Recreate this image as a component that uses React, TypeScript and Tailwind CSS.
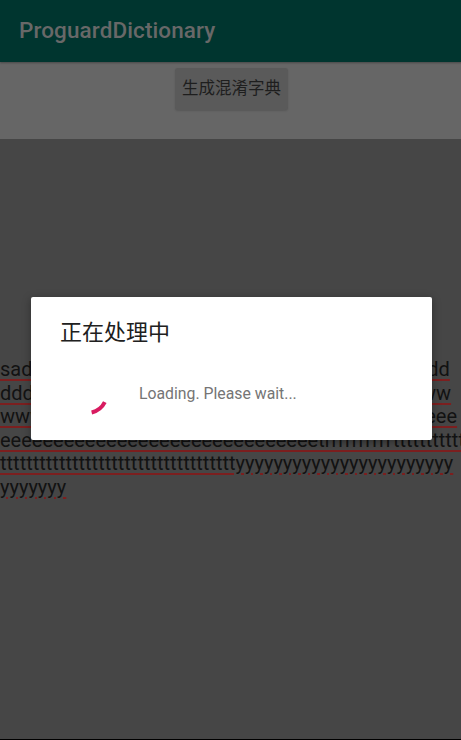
import React from 'react';

const lines = [
  'sad' + 'd'.repeat(37),
  'd'.repeat(20) + 'w'.repeat(15),
  'w'.repeat(17) + 'e'.repeat(19),
  'e'.repeat(30) + 't' + 'r'.repeat(10) + 't'.repeat(14),
  't'.repeat(36) + 'y'.repeat(23),
  'y'.repeat(7),
];

function Spinner() {
  return (
    <svg width="48" height="48" viewBox="0 0 48 48" className="absolute left-[32px] top-[72px]">
      <path d="M 41.82 33.08 A 20 20 0 0 1 28.64 43.45" fill="none" stroke="#d81b60" strokeWidth="4" />
    </svg>
  );
}

export default function App() {
  return (
    <div
      className="relative w-[461px] h-[740px] flex overflow-hidden bg-black"
      style={{ fontFamily: 'Roboto, "Noto Sans CJK SC", sans-serif' }}
    >
      {/* window edge */}
      <div className="w-[2px] h-[739px] flex flex-col">
        <div className="h-[139px] bg-[#6e6e6e]" />
        <div className="h-[475px] bg-[#575757]" />
        <div className="h-[1px] bg-[#8a8a8a]" />
        <div className="h-[24px] bg-[#575757]" />
        <div className="h-[1px] bg-[#8a8a8a]" />
        <div className="flex-1 bg-[#575757]" />
      </div>

      <div className="flex-1 h-[739px] flex flex-col">
        <div className="h-[62px] bg-[#00352f] flex items-center pl-[19px] shadow-[0_1px_2px_rgba(0,0,0,0.3)] z-10">
          <span className="text-[22.5px] font-medium text-[#686868] tracking-[0.1px]">ProguardDictionary</span>
        </div>

        <div className="h-[77px] bg-[#666666] flex justify-start pt-[6px] pl-[175px]">
          <div className="w-[113px] h-[42px] bg-[#5a5a5a] rounded-[3px] flex items-center justify-center text-[16.5px] text-[#1e1e1e] shadow-[0_1px_2px_rgba(0,0,0,0.15)]">
            生成混淆字典
          </div>
        </div>

        <div className="flex-1 bg-[#464646] pt-[219px]">
          {lines.map((l, i) => (
            <div key={i} className="h-[23.5px] leading-[23.5px] text-[20px] text-[#121212] whitespace-nowrap overflow-hidden">
              <span className="underline decoration-[#7c1f1f] decoration-2 underline-offset-[3px]">{l}</span>
            </div>
          ))}
        </div>
      </div>

      {/* progress dialog */}
      <div className="absolute left-[31px] top-[297px] w-[401px] h-[143px] bg-white rounded-[2px] shadow-[0_2px_8px_rgba(0,0,0,0.35)]">
        <div className="pl-[29px] pt-[25px] text-[22px] leading-[22px] text-[#202020]">正在处理中</div>
        <Spinner />
        <div className="absolute left-[108px] top-[89px] text-[15.8px] leading-[16px] text-[#757575]">Loading. Please wait...</div>
      </div>
    </div>
  );
}
